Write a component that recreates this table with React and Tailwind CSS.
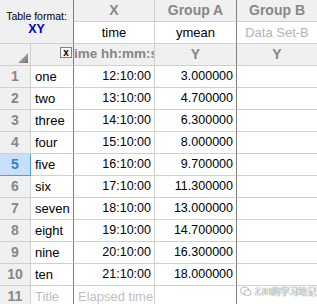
import React from "react";

const data = [
  ["one", "12:10:00", "3.000000"],
  ["two", "13:10:00", "4.700000"],
  ["three", "14:10:00", "6.300000"],
  ["four", "15:10:00", "8.000000"],
  ["five", "16:10:00", "9.700000"],
  ["six", "17:10:00", "11.300000"],
  ["seven", "18:10:00", "13.000000"],
  ["eight", "19:10:00", "14.700000"],
  ["nine", "20:10:00", "16.300000"],
  ["ten", "21:10:00", "18.000000"],
];

const LIGHT = "border-[#d0d0d0]";

export default function App() {
  return (
    <div className="relative w-[317px] h-[304px] overflow-hidden bg-white text-black font-['Liberation_Sans',Arial,sans-serif]">
      <div className="grid grid-cols-[31px_43px_81px_82px_80px] auto-rows-[22px]">
        {/* top-left merged block */}
        <div className={`col-span-2 row-span-2 bg-[#f0f0f0] border-r border-r-[#808080] border-b ${LIGHT} flex flex-col items-center justify-center pt-[2px]`}>
          <div className="text-[10.5px] leading-[13px] whitespace-nowrap">Table format:</div>
          <div className="text-[12.5px] leading-[13px] font-bold text-[#0000c8]">XY</div>
        </div>
        {/* header row 1 */}
        <div className={`bg-[#f0f0f0] border-r border-b ${LIGHT} flex items-center justify-center text-[14px] font-bold text-[#878787]`}>X</div>
        <div className={`bg-[#f0f0f0] border-r border-r-[#808080] border-b border-b-[#d0d0d0] flex items-center justify-center text-[14px] font-bold text-[#878787]`}>Group A</div>
        <div className={`bg-[#f0f0f0] border-b ${LIGHT} flex items-center justify-center text-[14px] font-bold text-[#878787]`}>Group B</div>
        {/* header row 2 */}
        <div className={`bg-white border-r border-b ${LIGHT} flex items-center justify-center text-[13px]`}>time</div>
        <div className={`bg-white border-r border-r-[#808080] border-b border-b-[#d0d0d0] flex items-center justify-center text-[13px]`}>ymean</div>
        <div className={`bg-white border-b ${LIGHT} flex items-center justify-center text-[13px] text-[#b4b4b4]`}>Data Set-B</div>
        {/* header row 3 */}
        <div className={`relative bg-[#f0f0f0] border-r border-b ${LIGHT}`}>
          <svg className="absolute right-[2px] bottom-[2px]" width="10" height="10" viewBox="0 0 10 10">
            <defs>
              <linearGradient id="tg" x1="0" y1="0" x2="1" y2="1">
                <stop offset="0" stopColor="#c8c8c8" />
                <stop offset="1" stopColor="#707070" />
              </linearGradient>
            </defs>
            <polygon points="10,0 10,10 0,10" fill="url(#tg)" />
          </svg>
        </div>
        <div className={`relative bg-[#f0f0f0] border-r border-r-[#808080] border-b border-b-[#d0d0d0]`}>
          <div className="absolute left-[29px] top-[3px] w-[12px] h-[11px] border border-[#808080] bg-[#f6f6f6] flex items-center justify-center text-[10px] leading-none font-bold">x</div>
        </div>
        <div className={`relative bg-[#f0f0f0] border-r border-b ${LIGHT} overflow-hidden`}>
          <span className="absolute left-[-8px] top-0 h-full flex items-center whitespace-nowrap text-[13.5px] font-bold text-[#878787]">Time hh:mm:ss</span>
        </div>
        <div className={`bg-[#f0f0f0] border-r border-r-[#808080] border-b border-b-[#d0d0d0] flex items-center justify-center text-[14px] font-bold text-[#878787]`}>Y</div>
        <div className={`bg-[#f0f0f0] border-b ${LIGHT} flex items-center justify-center text-[14px] font-bold text-[#878787]`}>Y</div>

        {data.map(([t, x, y], i) => {
          const sel = i === 4;
          return (
            <React.Fragment key={i}>
              <div
                className={
                  sel
                    ? "bg-[#c5e0f7] border-r border-b border-[#5a9ad8] flex items-center justify-center text-[14px] font-bold text-[#3a80c8]"
                    : `bg-[#f0f0f0] border-r border-b ${LIGHT} flex items-center justify-center text-[14px] font-bold text-[#878787]`
                }
              >
                {i + 1}
              </div>
              <div className="border-r border-r-[#808080] border-b border-b-[#d0d0d0] flex items-center pl-[4px] text-[13px]">{t}</div>
              <div className={`border-r border-b ${LIGHT} flex items-center justify-end pr-[3px] text-[12.5px]`}>{x}</div>
              <div className="border-r border-r-[#808080] border-b border-b-[#d0d0d0] flex items-center justify-end pr-[3px] text-[12.5px]">{y}</div>
              <div className={`border-b ${LIGHT}`}></div>
            </React.Fragment>
          );
        })}
        {/* row 11 */}
        <div className={`bg-[#f0f0f0] border-r border-b ${LIGHT} flex items-center justify-center text-[14px] font-bold text-[#878787]`}>11</div>
        <div className="border-r border-r-[#808080] border-b border-b-[#d0d0d0] flex items-center pl-[4px] text-[13px] text-[#c0c0c0]">Title</div>
        <div className={`border-r border-b ${LIGHT} flex items-center pl-[4px] overflow-hidden whitespace-nowrap text-[13px] text-[#c0c0c0]`}>Elapsed time</div>
        <div className="border-r border-r-[#808080] border-b border-b-[#d0d0d0]"></div>
        <div className={`border-b ${LIGHT}`}></div>
      </div>

      {/* watermark */}
      <div className="absolute left-[240px] top-[286px] flex items-center gap-[3px] whitespace-nowrap">
        <svg width="12" height="11" viewBox="0 0 14 12">
          <ellipse cx="5.5" cy="5" rx="4.8" ry="4" fill="white" stroke="#9a9a9a" strokeWidth="0.8" />
          <ellipse cx="9" cy="7.5" rx="4" ry="3.3" fill="white" stroke="#9a9a9a" strokeWidth="0.8" />
        </svg>
        <span className="text-[9px] leading-none text-white font-['Noto_Sans_CJK_SC',sans-serif] [text-shadow:0_0_1px_#666,0_0_1px_#666]">ZJH的学习笔记</span>
      </div>
    </div>
  );
}
